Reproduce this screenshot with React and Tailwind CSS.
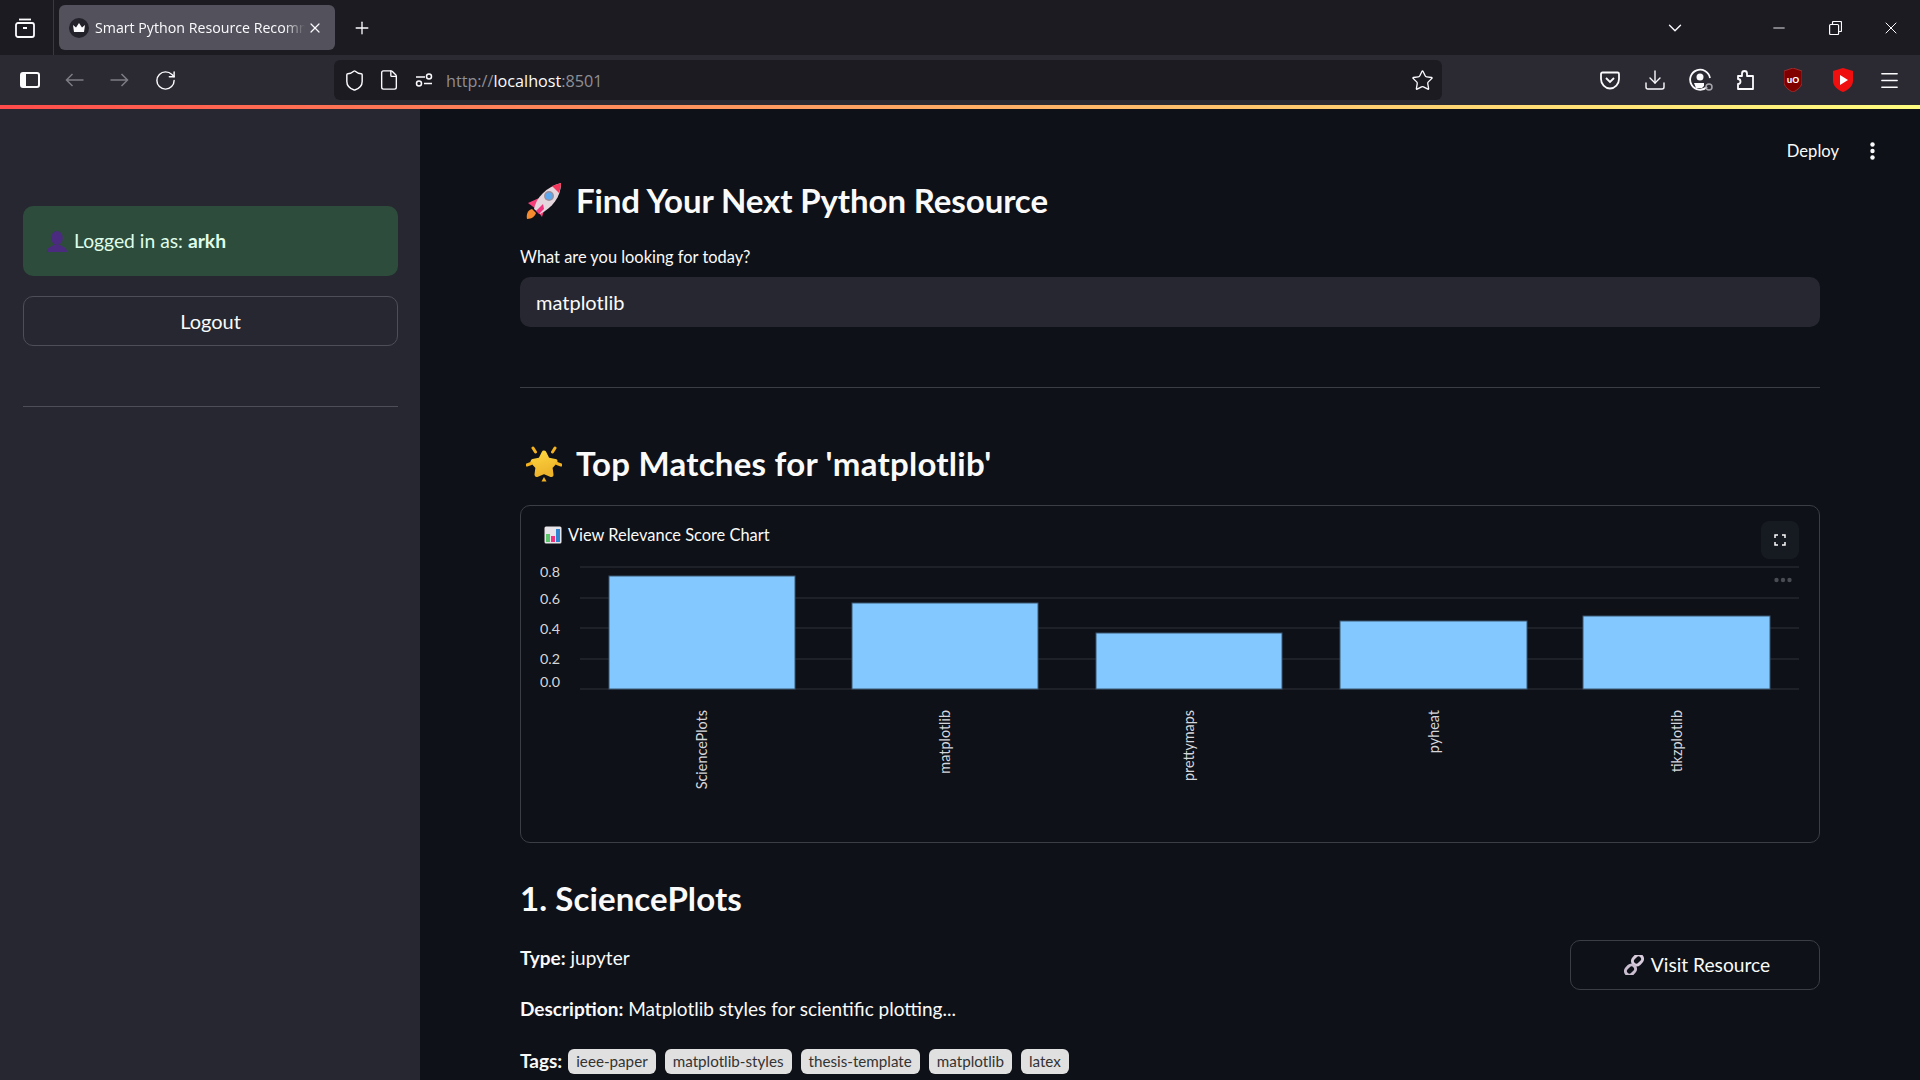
import { ChevronDown, Download, File, Menu, Minus, Plus, RotateCw, Shield, Star, X } from "lucide-react";

const source = "font-['Lato','Liberation_Sans',sans-serif]";

const bars = [
  { name: "SciencePlots", x: 69, w: 186, top: 576 },
  { name: "matplotlib", x: 312, w: 186, top: 603 },
  { name: "prettymaps", x: 556, w: 186, top: 633 },
  { name: "pyheat", x: 800, w: 187, top: 621 },
  { name: "tikzplotlib", x: 1043, w: 187, top: 616 },
];

const ticks = [
  { label: "0.8", y: 567, ty: 577 },
  { label: "0.6", y: 598, ty: 604 },
  { label: "0.4", y: 628, ty: 634 },
  { label: "0.2", y: 659, ty: 664 },
  { label: "0.0", y: 689, ty: 687 },
];

const tags = ["ieee-paper", "matplotlib-styles", "thesis-template", "matplotlib", "latex"];

function RocketIcon() {
  return (
    <svg width="38" height="36" viewBox="0 0 38 36" className="shrink-0">
      <path d="M2 36c-1-5 1-9 5-10l4 4c-1 3-4 6-9 6z" fill="#f58a2e" />
      <path d="M3 20l11-5-3 11z" fill="#f5407a" />
      <path d="M17 34l4-13-10 5z" fill="#f5407a" />
      <path d="M9 26C11 15 21 4 36 0c0 14-9 25-21 31z" fill="#e4d6dc" />
      <path d="M27 3l9-3c0 3-1 7-2 10z" fill="#f5365c" />
      <path d="M11 28l7-7 1 5-5 5z" fill="#f0337c" />
      <circle cx="24" cy="13" r="5" fill="#9a8f9c" />
      <circle cx="24" cy="13" r="3.500" fill="#5aa9f0" />
    </svg>
  );
}

function StarIcon() {
  return (
    <svg width="36" height="36" viewBox="0 0 36 36" className="shrink-0">
      <defs>
        <linearGradient id="starFill" x1="0" y1="0" x2="0.3" y2="1">
          <stop offset="0" stopColor="#fcd53f" />
          <stop offset="1" stopColor="#eeb52c" />
        </linearGradient>
      </defs>
      <path d="M18 7l3.500 7 7.500 1.500-5 5.500 1 7.500-7-3-7 3 1-7.500-5-5.500 7.500-1.500z" fill="url(#starFill)" stroke="url(#starFill)" strokeWidth="5" strokeLinejoin="round" />
      <path d="M7 2l2.500 4M29 2l-2.500 4M1 19l4-1.500M35 19l-4-1.500" stroke="#f2b222" strokeWidth="3" strokeLinecap="round" />
      <path d="M18 31l-2.500 4.500h5z" fill="#f2b222" />
    </svg>
  );
}

function ChartEmoji() {
  return (
    <svg width="18" height="18" viewBox="0 0 18 18" className="shrink-0">
      <rect x="0.500" y="0.500" width="17" height="17" rx="1.500" fill="#e8e6ea" />
      <rect x="2" y="8" width="4" height="8" fill="#5cc46a" />
      <rect x="7" y="10" width="4" height="6" fill="#f0337c" />
      <rect x="12" y="3" width="4" height="13" fill="#2f86d0" />
    </svg>
  );
}

function PersonEmoji() {
  return (
    <svg width="20" height="21" viewBox="0 0 20 21" className="shrink-0">
      <ellipse cx="10" cy="7" rx="5.800" ry="7" fill="#4b2b7f" />
      <path d="M0 21c0-4 3-5 7-7h6c4 2 7 3 7 7z" fill="#4b2b7f" />
    </svg>
  );
}

function LinkEmoji() {
  return (
    <svg width="20" height="20" viewBox="0 0 20 20" fill="none" className="shrink-0">
      <rect x="9.500" y="-0.500" width="8" height="11" rx="4" transform="rotate(45 13.500 5)" stroke="#d8cbdc" strokeWidth="3" />
      <rect x="2.500" y="9.500" width="8" height="11" rx="4" transform="rotate(45 6.500 15)" stroke="#cbbdd0" strokeWidth="3" />
    </svg>
  );
}

function Toolbar() {
  return (
    <div className="flex h-[50px] items-center bg-[#2b2a33] text-[#fbfbfe]">
      <div className="flex w-[334px] shrink-0 items-center pl-[20px]">
        <svg width="20" height="16" viewBox="0 0 20 16" fill="none">
          <rect x="1" y="1" width="18" height="14" rx="2" stroke="#fbfbfe" strokeWidth="2" />
          <rect x="1" y="1" width="5" height="14" fill="#fbfbfe" />
        </svg>
        <svg width="19" height="14" viewBox="0 0 19 14" fill="none" stroke="#7d7c84" strokeWidth="1.500" className="ml-[25px]">
          <path d="M1.500 7H18.500M7.500 1L1.500 7l6 6" />
        </svg>
        <svg width="19" height="14" viewBox="0 0 19 14" fill="none" stroke="#7d7c84" strokeWidth="1.500" className="ml-[26px]">
          <path d="M17.500 7H0.500M11.500 1l6 6-6 6" />
        </svg>
        <RotateCw size={23} strokeWidth={1.500} className="ml-[25px]" />
      </div>
      <div className="flex h-[40px] w-[1108px] shrink-0 items-center rounded-[6px] bg-[#1c1b22] pl-[9px] pr-[8px]">
        <Shield size={23} strokeWidth={1.500} />
        <File size={22} strokeWidth={1.500} className="ml-[12px]" />
        <svg width="18" height="14" viewBox="0 0 18 14" fill="none" stroke="#fbfbfe" strokeWidth="1.500" className="ml-[15px]">
          <path d="M1 4h9M9 10.500h8" />
          <circle cx="14" cy="3.500" r="2.500" />
          <circle cx="4" cy="10.500" r="2.500" />
        </svg>
        <span className="ml-[13px] mt-[3px] font-['Open_Sans',sans-serif] text-[16.200px] text-[#8f8f94]">
          http://<span className="text-[#fbfbfe]">localhost</span>:8501
        </span>
        <Star size={23} strokeWidth={1.400} className="ml-auto" />
      </div>
      <div className="flex grow items-center pl-[158px]">
        <svg width="20" height="19" viewBox="0 0 20 19" fill="none" stroke="#fbfbfe" strokeWidth="1.800">
          <path d="M2.500 1.500h15a1.500 1.500 0 0 1 1.500 1.500v5a9 9.500 0 0 1-18 0V3a1.500 1.500 0 0 1 1.500-1.500z" />
          <path d="M6 7l4 4 4-4" />
        </svg>
        <Download size={24} strokeWidth={1.400} className="ml-[23px]" />
        <svg width="24" height="24" viewBox="0 0 24 24" fill="none" className="ml-[22px]">
          <path d="M18 19a10 10 0 1 1 3-9" stroke="#fbfbfe" strokeWidth="1.800" />
          <circle cx="11" cy="9" r="3.500" fill="#fbfbfe" />
          <path d="M5 15h10v3l-2 2H7z" fill="#fbfbfe" />
          <circle cx="20" cy="19" r="3" stroke="#a5a5ab" strokeWidth="1.500" />
        </svg>
        <svg width="19" height="20" viewBox="0 0 19 20" fill="none" stroke="#fbfbfe" strokeWidth="1.800" className="ml-[22px]">
          <path d="M7 6V3.500a2.500 2.500 0 0 1 5 0V6h6v13H3v-5a2.500 2.500 0 0 0 0-5V6z" strokeLinejoin="round" />
        </svg>
        <svg width="18" height="24" viewBox="0 0 18 24" className="ml-[30px]">
          <path d="M9 0l9 3v11c0 4-4 8-9 10-5-2-9-6-9-10V3z" fill="#800000" stroke="#a33" strokeWidth="0.800" />
          <text x="9" y="15" textAnchor="middle" fontSize="9" fontWeight="700" fill="#fff" fontFamily="Liberation Sans, sans-serif">uO</text>
        </svg>
        <svg width="20" height="24" viewBox="0 0 20 24" className="ml-[31px]">
          <path d="M10 0l10 3v10c0 5-5 9-10 11C5 22 0 18 0 13V3z" fill="#f00f0f" />
          <path d="M7 7l8 5-8 5z" fill="#fff" />
        </svg>
        <Menu size={23} strokeWidth={1.500} className="ml-[25px]" />
      </div>
    </div>
  );
}

function TabBar() {
  return (
    <div className="flex h-[55px] items-center bg-[#1c1b22] text-[#fbfbfe]">
      <div className="flex h-full w-[54px] shrink-0 items-center border-r border-[#3a3940] pl-[15px]">
        <svg width="20" height="20" viewBox="0 0 20 20" fill="none" stroke="#fbfbfe" strokeWidth="1.800">
          <rect x="1" y="5" width="18" height="14" rx="2" />
          <path d="M4 1.500h12" />
          <path d="M8 10h4" strokeWidth="2" />
        </svg>
      </div>
      <div className="relative ml-[5px] flex h-[45px] w-[276px] shrink-0 items-center overflow-hidden rounded-[6px] bg-[#53525c] pl-[10px]">
        <svg width="20" height="20" viewBox="0 0 20 20" className="shrink-0">
          <circle cx="10" cy="10" r="10" fill="#23222b" />
          <path d="M4 7l3 2.500L10 5l3 4.500L16 7l-1 7H5z" fill="#fbfbfe" />
        </svg>
        <span className="ml-[6px] w-[210px] overflow-hidden whitespace-nowrap font-['Open_Sans',sans-serif] text-[14.200px] [mask-image:linear-gradient(to_right,black_90%,transparent)]">
          Smart Python Resource Recommender
        </span>
        <X size={16} strokeWidth={1.800} className="ml-[2px] shrink-0" />
      </div>
      <Plus size={20} strokeWidth={1.600} className="ml-[17px]" />
      <div className="ml-auto flex items-center">
        <ChevronDown size={22} strokeWidth={1.500} />
        <Minus size={18} strokeWidth={1.200} className="ml-[84px]" />
        <svg width="13" height="14" viewBox="0 0 13 14" fill="none" stroke="#fbfbfe" strokeWidth="1.200" className="ml-[41px]">
          <rect x="0.600" y="3.500" width="9" height="10" rx="1" />
          <path d="M3.500 3.500V1.500a1 1 0 0 1 1-1h7a1 1 0 0 1 1 1v8a1 1 0 0 1-1 1h-2" />
        </svg>
        <X size={20} strokeWidth={1.200} className="ml-[39px] mr-[19px]" />
      </div>
    </div>
  );
}

function Sidebar() {
  return (
    <aside className="w-[420px] shrink-0 bg-[#262730] pl-[23px] pr-[22px] pt-[97px]">
      <div className="flex h-[70px] items-center gap-[7px] rounded-[10px] bg-[#2e4c3c] pl-[24px] text-[19.300px] text-[#dffde9]">
        <PersonEmoji />
        <span className="pt-[1px]">
          Logged in as: <b className="font-bold">arkh</b>
        </span>
      </div>
      <button className="mt-[20px] h-[50px] w-full rounded-[10px] border border-[#4d4e57] text-[20px] text-[#fafafa]">
        Logout
      </button>
      <hr className="mt-[60px] border-[#4d4e57]" />
    </aside>
  );
}

function RelevanceChart() {
  return (
    <svg width="1260" height="240" viewBox="540 560 1260 240" className="mt-[15px] ml-[19px] block">
      {ticks.map((t) => (
        <g key={t.label}>
          <line x1="580" x2="1799" y1={t.y} y2={t.y} stroke="#31333c" strokeWidth="1.200" />
          <text x="560" y={t.ty} textAnchor="end" fontSize="14.300" fill="#d5d6da" fontFamily="Lato, sans-serif">
            {t.label}
          </text>
        </g>
      ))}
      {bars.map((b) => (
        <g key={b.name}>
          <rect x={b.x + 540} y={b.top} width={b.w} height={689 - b.top} fill="#83c9ff" stroke="#3a5671" strokeWidth="1" />
          <text
            transform={`translate(${b.x + 540 + b.w / 2 + 5} 710) rotate(-90)`}
            textAnchor="end"
            fontSize="14.400"
            fill="#d5d6da"
            fontFamily="Lato, sans-serif"
          >
            {b.name}
          </text>
        </g>
      ))}
      <circle cx="1776.500" cy="580" r="2.200" fill="#4a4c54" />
      <circle cx="1783" cy="580" r="2.200" fill="#4a4c54" />
      <circle cx="1789.500" cy="580" r="2.200" fill="#4a4c54" />
    </svg>
  );
}

export default function App() {
  return (
    <div className={`flex h-screen flex-col overflow-hidden bg-[#0e1117] ${source}`}>
      <TabBar />
      <Toolbar />
      <div className="h-[4px] shrink-0 bg-gradient-to-r from-[#ff4b4b] to-[#fffd80]" />
      <div className="flex min-h-0 grow">
        <Sidebar />
        <main className="relative grow px-[100px] pt-[65px] text-[#fafafa]">
          <div className="absolute right-[45px] top-[30px] flex items-center gap-[31px] text-[16.600px]">
            <span>Deploy</span>
            <svg width="5" height="18" viewBox="0 0 5 18" fill="#fafafa">
              <circle cx="2.500" cy="2.500" r="2.200" />
              <circle cx="2.500" cy="9" r="2.200" />
              <circle cx="2.500" cy="15.500" r="2.200" />
            </svg>
          </div>

          <h2 className="flex h-[54px] items-center gap-[13px] pl-[5px] text-[33px] font-bold tracking-[-0.1px]">
            <RocketIcon />
            Find Your Next Python Resource
          </h2>
          <label className="mt-[19px] block h-[20px] text-[16.400px] leading-[20px]">What are you looking for today?</label>
          <div className="mt-[10px] flex h-[50px] items-center rounded-[10px] bg-[#262730] pl-[16px] text-[20px]">matplotlib</div>
          <hr className="mt-[60px] border-[#3c3e46]" />

          <h2 className="mt-[49px] flex h-[54px] items-center gap-[14px] pl-[6px] text-[33px] font-bold tracking-[0.25px]">
            <StarIcon />
            Top Matches for 'matplotlib'
          </h2>
          <section className="relative mt-[14px] h-[338px] rounded-[10px] border border-[#3c3e46] pt-[19px]">
            <div className="flex h-[20px] items-center gap-[6px] pl-[23px] text-[16.400px]">
              <ChartEmoji />
              View Relevance Score Chart
            </div>
            <RelevanceChart />
            <div className="absolute right-[20px] top-[15px] flex h-[38px] w-[38px] items-center justify-center rounded-[8px] bg-[#161a21]">
              <svg width="12" height="12" viewBox="0 0 12 12" fill="none" stroke="#fafafa" strokeWidth="1.500">
                <path d="M1 4V1h3M8 1h3v3M11 8v3H8M4 11H1V8" />
              </svg>
            </div>
          </section>

          <h3 className="mt-[30px] text-[33px] font-bold leading-[50px] tracking-[0.1px]">1. SciencePlots</h3>
          <div className="mt-[17px] flex items-start justify-between">
            <div className="pt-[4px] text-[19px] leading-[28px]">
              <p>
                <b className="font-bold">Type:</b> jupyter
              </p>
              <p className="mt-[23px]">
                <b className="font-bold">Description:</b> Matplotlib styles for scientific plotting...
              </p>
              <p className="mt-[24px] flex items-center">
                <b className="font-bold">Tags:</b>
                <span className="ml-[6px] flex gap-[9px]">
                  {tags.map((tag) => (
                    <span key={tag} className="flex h-[25px] items-center rounded-[6px] bg-[#e0e0e0] px-[8px] text-[15.200px] text-[#333333]">
                      {tag}
                    </span>
                  ))}
                </span>
              </p>
            </div>
            <button className="flex h-[50px] w-[250px] items-center justify-center gap-[7px] rounded-[10px] border border-[#3c3e46] pl-[4px] text-[19.200px]">
              <LinkEmoji />
              Visit Resource
            </button>
          </div>
        </main>
      </div>
    </div>
  );
}
